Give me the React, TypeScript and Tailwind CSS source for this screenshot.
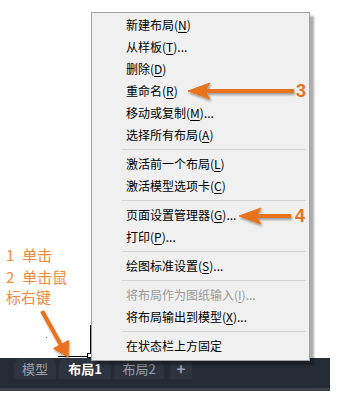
import React from "react";

type Item = { label: string; key: string; tail?: string; disabled?: boolean } | "sep";

const items: Item[] = [
  { label: "新建布局", key: "N" },
  { label: "从样板", key: "T", tail: "..." },
  { label: "删除", key: "D" },
  { label: "重命名", key: "R" },
  { label: "移动或复制", key: "M", tail: "..." },
  { label: "选择所有布局", key: "A" },
  "sep",
  { label: "激活前一个布局", key: "L" },
  { label: "激活模型选项卡", key: "C" },
  "sep",
  { label: "页面设置管理器", key: "G", tail: "..." },
  { label: "打印", key: "P", tail: "..." },
  "sep",
  { label: "绘图标准设置", key: "S", tail: "..." },
  "sep",
  { label: "将布局作为图纸输入", key: "I", tail: "...", disabled: true },
  { label: "将布局输出到模型", key: "X", tail: "..." },
  "sep",
  { label: "在状态栏上方固定", key: "" },
];

const cjk = { fontFamily: '"Noto Sans CJK SC", "Noto Sans", sans-serif' };

export default function App() {
  return (
    <div className="relative w-[339px] h-[399px] bg-white overflow-hidden flex flex-col" style={cjk}>
      {/* canvas area */}
      <div className="relative h-[358px] pl-[6px] pt-[245px] text-[#ef8a3d] text-[15px] leading-[20px]">
        <div>
          <span>1</span>
          <span className="ml-[8px]">单击</span>
        </div>
        <div className="mt-[2px]">
          <span>2</span>
          <span className="ml-[8px]">单击鼠</span>
        </div>
        <div>标右键</div>
        {/* viewport corner lines */}
        <div className="absolute left-[90px] top-[325px] w-px h-[31px] bg-black" />
        <div className="absolute left-[58px] top-[356px] w-[32px] h-px bg-black" />
        <div className="absolute left-[87px] top-[353px] w-[5px] h-[5px] border border-black bg-white" />
        <div className="absolute left-[46px] top-[337px] w-px h-px bg-[#3b6fd0]" />
      </div>

      {/* tab bar */}
      <div className="w-[330px] h-[30px] bg-[#252b35] flex items-start pl-[14px] gap-[3px] text-[13px] leading-[20px]">
        <div className="w-[42px] h-[21px] rounded-t-[7px] bg-[#2d343f] flex items-center justify-center text-[#98a1ab]">模型</div>
        <div className="w-[52px] h-[21px] rounded-t-[7px] bg-[#2d343f] flex items-center justify-center text-white font-bold">布局1</div>
        <div className="w-[50px] h-[21px] rounded-t-[7px] bg-[#2d343f] flex items-center justify-center text-[#98a1ab]">布局2</div>
        <div className="ml-[3px] w-[22px] h-[21px] rounded-t-[7px] bg-[#2d343f] flex items-center justify-center text-[#9aa3ad] font-bold text-[15px]">+</div>
      </div>
      <div className="w-[330px] h-[3px] bg-[#3c424b]" />

      {/* context menu */}
      <div className="absolute left-[91px] top-[12px] w-[219px] bg-[#f0f0f0] border border-[#a0a0a0] pt-[1px] pb-[3px] shadow-[4px_4px_2px_rgba(0,0,0,0.32)] text-[12px]">
        {items.map((it, i) =>
          it === "sep" ? (
            <div key={i} className="h-[7px] flex items-center pl-[30px] pr-[3px]">
              <div className="h-px w-full bg-[#d5d5d5]" />
            </div>
          ) : (
            <div
              key={i}
              className={`h-[22px] flex items-center pl-[34px] ${it.disabled ? "text-[#9a9a9a]" : "text-black"}`}
            >
              <span>{it.label}</span>
              {it.key && (
                <span>
                  (<span className="underline underline-offset-2">{it.key}</span>)
                </span>
              )}
              {it.tail && <span>{it.tail}</span>}
            </div>
          )
        )}
      </div>

      {/* arrows */}
      <svg className="absolute left-0 top-0 pointer-events-none" width="339" height="399">
        <defs>
          <filter id="sh" x="-20%" y="-50%" width="140%" height="200%">
            <feDropShadow dx="1" dy="2" stdDeviation="1.2" floodColor="#000" floodOpacity="0.35" />
          </filter>
        </defs>
        <g filter="url(#sh)" fill="#e8731c" stroke="#e8731c">
          <line x1="204" y1="91" x2="294" y2="91" strokeWidth="4" />
          <polygon points="188,91 210,83 205,91 210,99" strokeWidth="1" />
          <line x1="255" y1="216" x2="291" y2="216" strokeWidth="4" />
          <polygon points="239,216 261,208 256,216 261,224" strokeWidth="1" />
          <line x1="42" y1="311" x2="61" y2="345" strokeWidth="4" />
          <polygon points="68,357 53.5,348.5 68.5,340.5" strokeWidth="1" />
        </g>
      </svg>
      <div
        className="absolute left-[296px] top-[80px] text-[18px] font-bold leading-[22px] text-[#e8731c]"
        style={{ fontFamily: '"Liberation Sans", Arial, sans-serif' }}
      >
        3
      </div>
      <div
        className="absolute left-[295px] top-[205px] text-[18px] font-bold leading-[22px] text-[#e8731c]"
        style={{ fontFamily: '"Liberation Sans", Arial, sans-serif' }}
      >
        4
      </div>
    </div>
  );
}
